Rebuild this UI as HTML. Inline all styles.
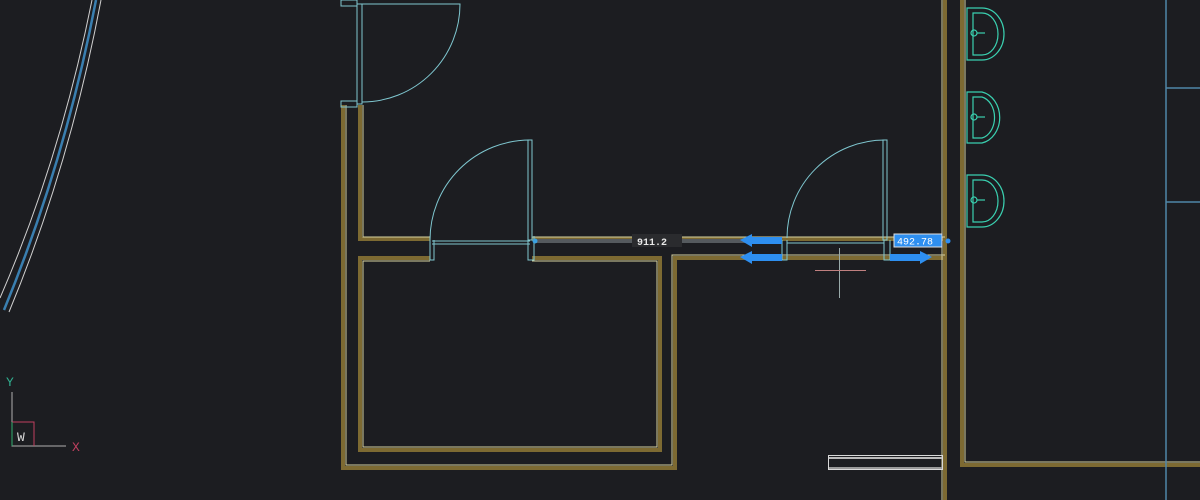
<!DOCTYPE html>
<html><head><meta charset="utf-8"><style>
html,body{margin:0;padding:0;background:#1c1d21;}
svg{display:block;}
text{font-family:"Liberation Mono",monospace;}
</style></head><body>
<svg width="1200" height="500" viewBox="0 0 1200 500" xmlns="http://www.w3.org/2000/svg">
<rect width="1200" height="500" fill="#1c1d21"/>
<g fill="none">
<path d="M92 0 Q60 160 0 298" stroke="#d0d0d0" stroke-width="1"/>
<path d="M101 0 Q70 165 9 312" stroke="#d0d0d0" stroke-width="1"/>
<path d="M96 0 Q65 162 4 310" stroke="#3a7fb0" stroke-width="2.5"/>
</g>
<g fill="none" stroke="#7d6a32" stroke-width="4">
<path d="M343 105 V468 H675 V258 H945"/>
<path d="M430 258 H360 V450 H660 V258 H532"/>
<path d="M360 105 V239 H430 M532 239 H945"/>
<path d="M945 0 V500 M962 0 V465 H1200"/>
</g>
<g fill="none" stroke="#d8d2a0" stroke-width="1">
<path d="M346 105 V465 H672 V255 H945"/>
<path d="M430 261 H363 V447 H657 V261 H532"/>
<path d="M363 105 V237 H430 M532 237 H945"/>
<path d="M942 0 V500 M965 0 V462 H1200"/>
</g>
<g fill="none" stroke="#7fc7d0" stroke-width="1">
<rect x="341" y="0" width="16" height="6"/>
<rect x="341" y="101" width="16" height="6"/>
<rect x="357" y="4" width="5" height="100"/>
<path d="M362 4 H460 A98 98 0 0 1 362 102"/>
<rect x="528" y="140" width="4" height="100"/>
<path d="M530 140 A100 100 0 0 0 430 240"/>
<path d="M430 236 V260 H434 V240 M528 240 V260 H534 V236"/>
<path d="M432 241 H530 M432 244 H530"/>
<rect x="883" y="140" width="4" height="100"/>
<path d="M885 140 A98 98 0 0 0 787 238"/>
<path d="M782 240 V260 H787 V240 M884 240 V260 H890 V240"/>
<path d="M787 243 H884"/>
</g>
<rect x="535" y="239" width="215" height="4" fill="#555a5e"/>
<circle cx="535" cy="241" r="2.5" fill="#3aa0e0"/>
<rect x="632" y="234" width="50" height="13" fill="#2a2b2e"/>
<text x="637" y="245" font-size="10" fill="#e8e8e8" font-weight="bold">911.2</text>
<g fill="#2e8ff0">
<path d="M740 240 L752 234 V237 H782 V244 H752 V247 Z"/>
<path d="M740 257 L752 251 V254 H782 V261 H752 V264 Z"/>
<path d="M932 257 L920 251 V254 H890 V261 H920 V264 Z"/>
<circle cx="948" cy="241" r="2.5"/>
</g>
<rect x="894" y="234" width="48" height="13" fill="#2e8ff0" stroke="#e0e0e0" stroke-width="1"/>
<text x="897" y="244.5" font-size="10" fill="#ffffff">492.78</text>
<path d="M839.5 248 V298" stroke="#9aa" stroke-width="1"/>
<path d="M815 270.5 H866" stroke="#c08080" stroke-width="1"/>
<g fill="none" stroke="#3ad0b0" stroke-width="1.2">
<path d="M967 8 H982 A22 26 0 0 1 982 60 H967 Z"/>
<path d="M973 13 H982 A16 21 0 0 1 982 55 H973 Z"/>
<circle cx="974" cy="33" r="3"/><path d="M977 33 H985"/>
<path d="M967 92 H982 A22 26 0 0 1 982 143 H967 Z"/>
<path d="M973 97 H982 A16 21 0 0 1 982 138 H973 Z"/>
<circle cx="974" cy="117" r="3"/><path d="M977 117 H985"/>
<path d="M967 175 H982 A22 26 0 0 1 982 227 H967 Z"/>
<path d="M973 180 H982 A16 21 0 0 1 982 222 H973 Z"/>
<circle cx="974" cy="200" r="3"/><path d="M977 200 H985"/>
</g>
<g stroke="#4f86a8" stroke-width="1.5" fill="none">
<path d="M1166 0 V500 M1166 88 H1200 M1166 202 H1200"/>
</g>
<rect x="828.5" y="455.5" width="114" height="14" fill="none" stroke="#d8d8d8" stroke-width="1"/>
<rect x="829" y="457" width="113" height="2" fill="#bbbbbb"/>
<rect x="829" y="467" width="113" height="2" fill="#999"/>
<path d="M12 392 V446 H66" stroke="#b0b0b0" stroke-width="1" fill="none"/>
<path d="M12 422 H34 V446" stroke="#c04060" stroke-width="1" fill="none"/>
<path d="M12 422 V446" stroke="#30b070" stroke-width="1"/>
<text x="6" y="386" font-size="13" fill="#30b090" font-family="Liberation Sans,sans-serif">Y</text>
<text x="72" y="451" font-size="13" fill="#c04060" font-family="Liberation Sans,sans-serif">X</text>
<text x="17" y="441" font-size="13" fill="#d8d8d8" font-family="Liberation Sans,sans-serif">W</text>
</svg>
</body></html>
